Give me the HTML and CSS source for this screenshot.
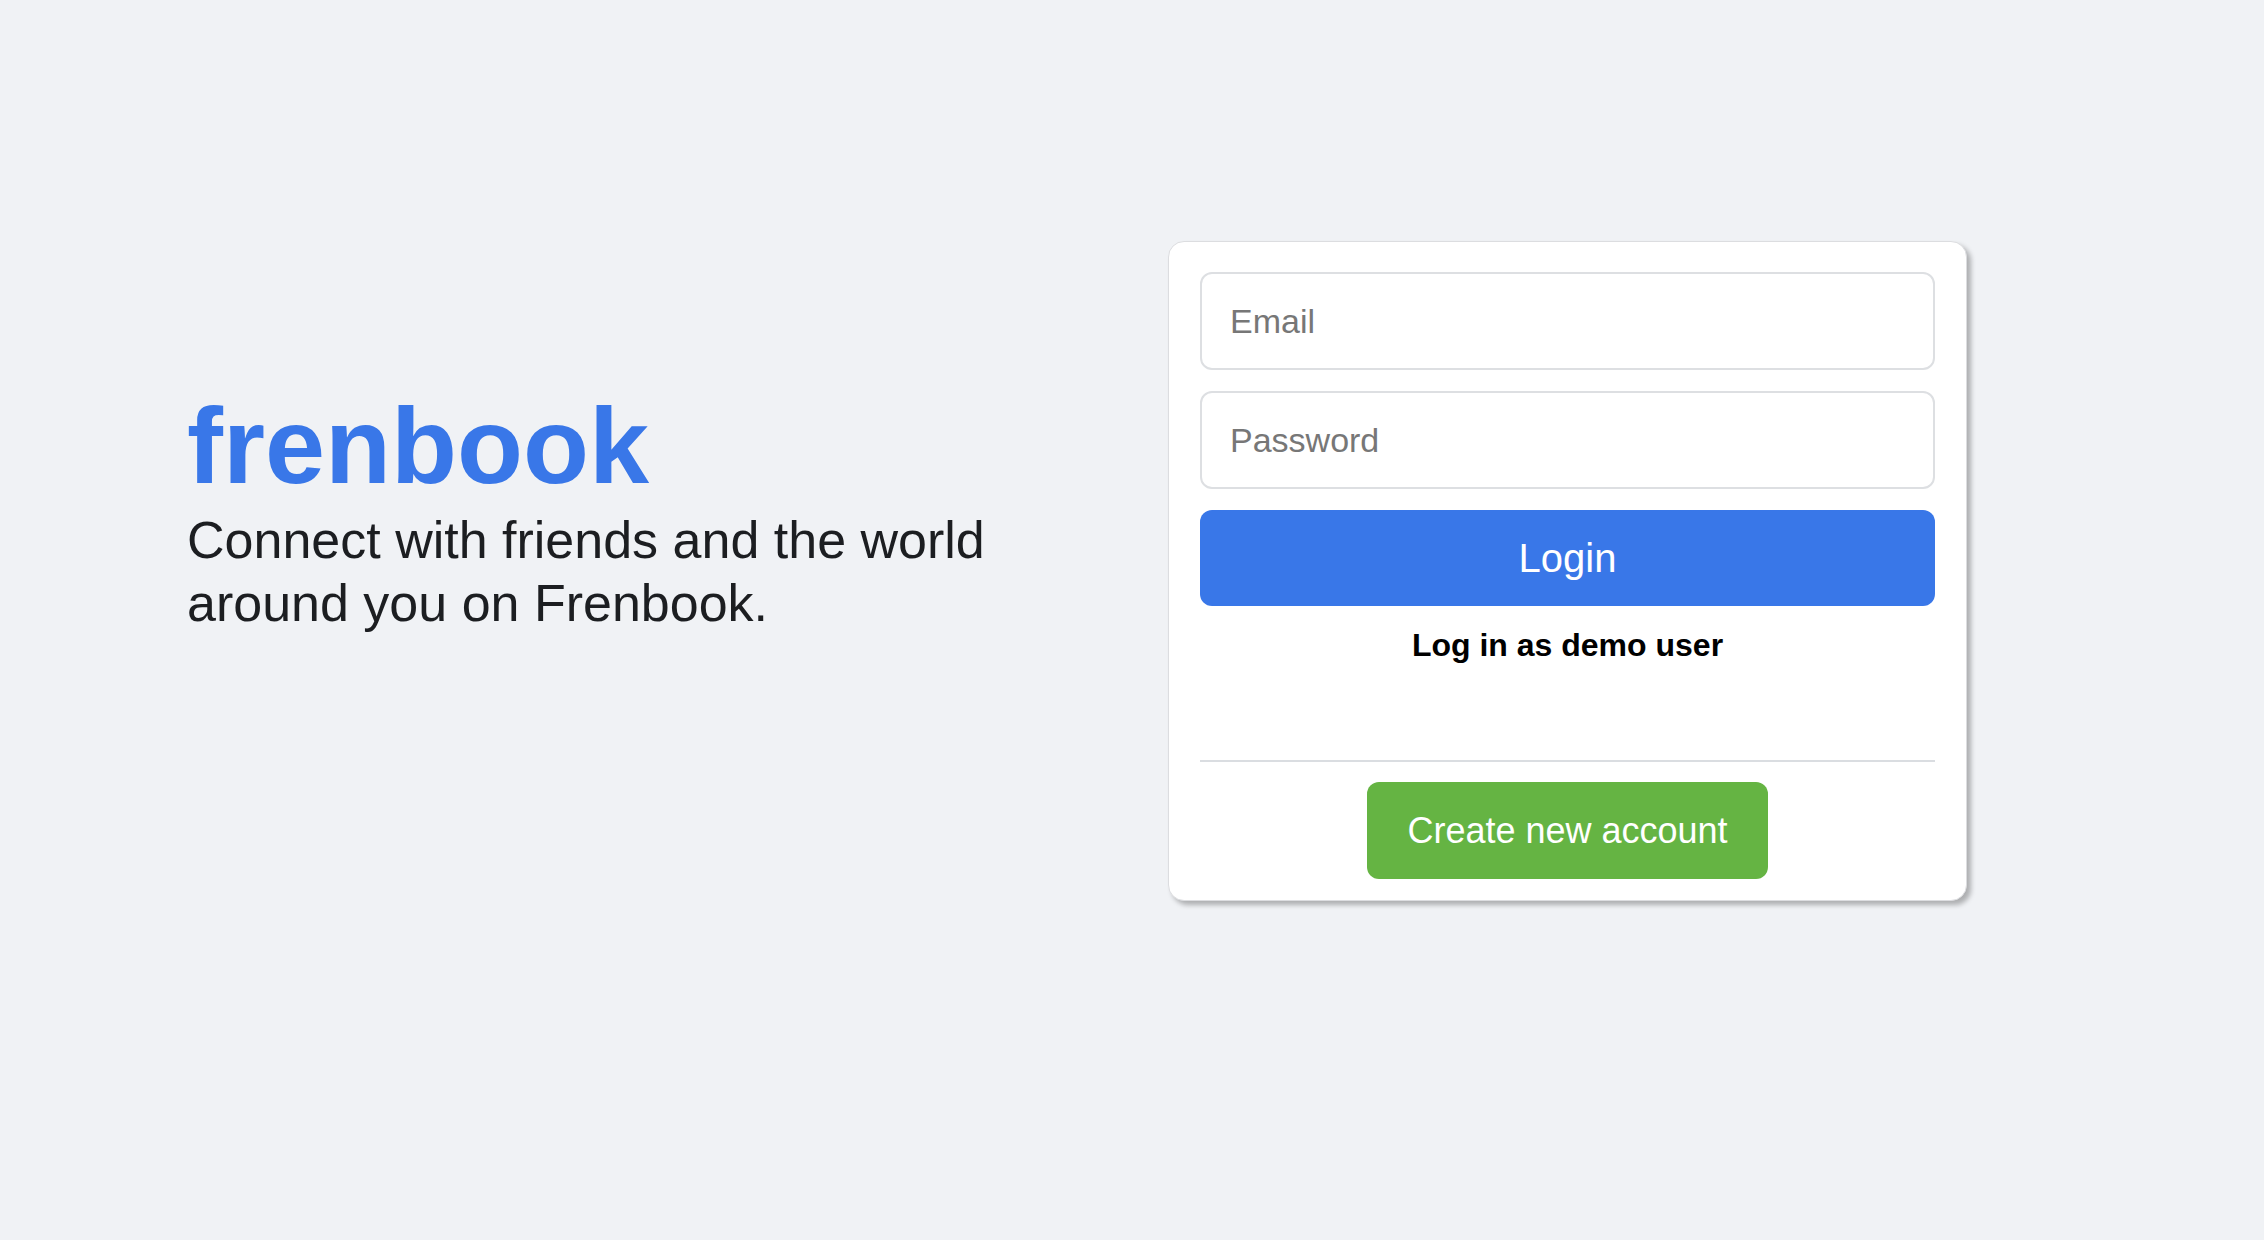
FILE: index.html
```html
<!DOCTYPE html>
<html lang="en">
<head>
<meta charset="utf-8">
<title>Frenbook</title>
<link rel="stylesheet" href="styles.css">
</head>
<body>
<main class="page">
  <section class="intro">
    <h1 class="logo">frenbook</h1>
    <p class="tagline">Connect with friends and the world around you on Frenbook.</p>
  </section>
  <section class="card">
    <form class="login-form">
      <input class="field" type="text" placeholder="Email">
      <input class="field" type="password" placeholder="Password">
      <button class="btn-login" type="button">Login</button>
      <a class="demo-link" href="#">Log in as demo user</a>
    </form>
    <div class="divider"></div>
    <div class="create-row">
      <button class="btn-create" type="button">Create new account</button>
    </div>
  </section>
</main>
</body>
</html>
```

FILE: styles.css
```css
* { box-sizing: border-box; }
html, body {
  margin: 0;
  padding: 0;
  background: #f0f2f5;
  font-family: "Liberation Sans", Arial, Helvetica, sans-serif;
}
.page {
  display: flex;
  align-items: flex-start;
  padding: 241px 0 0 187px;
  min-height: 1240px;
}
.intro {
  width: 981px;
  padding-top: 151px;
}
.logo {
  margin: 0;
  font-size: 108px;
  line-height: 108px;
  font-weight: 700;
  color: #3977e8;
}
.tagline {
  margin: 9px 0 0;
  width: 860px;
  font-size: 52px;
  line-height: 63px;
  color: #1c1e21;
}
.card {
  width: 799px;
  background: #fff;
  border: 1px solid #dcdde0;
  border-radius: 16px;
  box-shadow: 4px 4px 5px rgba(0, 0, 0, 0.28);
  padding: 30px 31px 21px;
}
.login-form {
  display: flex;
  flex-direction: column;
  align-items: center;
}
.field {
  width: 100%;
  height: 98px;
  border: 2px solid #dddfe2;
  border-radius: 12px;
  padding: 0 28px;
  font-family: "Liberation Sans", Arial, sans-serif;
  font-size: 34px;
  color: #1c1e21;
  background: #fff;
  outline: none;
  margin-bottom: 21px;
}
.field::placeholder { color: #777777; }
.btn-login {
  width: 100%;
  height: 96px;
  border: none;
  border-radius: 12px;
  background: #3977e8;
  color: #fff;
  font-family: "Liberation Sans", Arial, sans-serif;
  font-size: 40px;
  cursor: pointer;
}
.demo-link {
  margin-top: 19px;
  font-size: 32px;
  line-height: 40px;
  font-weight: 700;
  color: #000;
  text-decoration: none;
}
.divider {
  margin-top: 95px;
  height: 2px;
  background: #dadde1;
}
.create-row {
  display: flex;
  justify-content: center;
  margin-top: 20px;
}
.btn-create {
  height: 97px;
  padding: 0 40px;
  border: none;
  border-radius: 12px;
  background: #65b443;
  color: #fff;
  font-family: "Liberation Sans", Arial, sans-serif;
  font-size: 36px;
  cursor: pointer;
}
```
